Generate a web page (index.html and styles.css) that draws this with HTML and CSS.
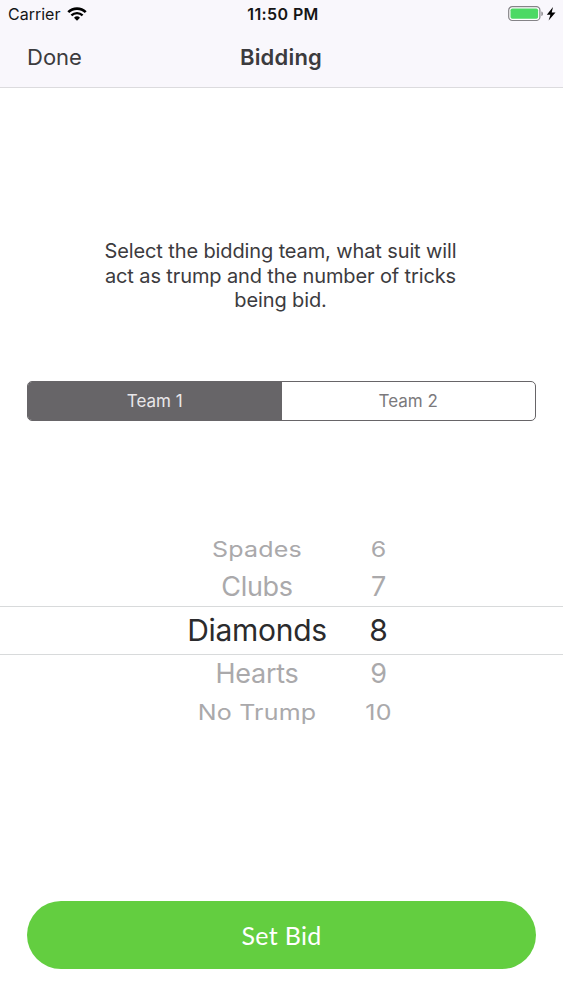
FILE: index.html
```html
<!DOCTYPE html>
<html lang="en">
<head>
  <meta charset="UTF-8">
  <meta name="viewport" content="width=device-width, initial-scale=1.0">
  <title>Bidding</title>
  <link rel="stylesheet" href="styles.css">
</head>
<body>

  <!-- Status bar and navigation -->
  <header class="header">
    <div class="status-bar">
      <div class="status-left">
        <span class="carrier">Carrier</span>
        <svg class="wifi" width="20" height="14" viewBox="0 0 20 14">
          <path d="M1.300 5.100a12.400 12.400 0 0 1 17.400 0" fill="none" stroke="#000" stroke-width="2.700"/>
          <path d="M4.400 8.400a8 8 0 0 1 11.200 0" fill="none" stroke="#000" stroke-width="2.300"/>
          <path d="M10 13.800l-3-3.100a4.300 4.300 0 0 1 6 0z"/>
        </svg>
      </div>
      <span class="time">11:50 PM</span>
      <div class="status-right">
        <svg width="49" height="16" viewBox="0 0 49 16">
          <rect x=".7" y=".7" width="31.2" height="13.8" rx="3.6" fill="#fff" stroke="#858387" stroke-width="1.2"/>
          <rect x="2.5" y="2.5" width="27.6" height="10.2" rx="1.8" fill="#4cd964"/>
          <path d="M33.4 5.4c2 .6 2 3.9 0 4.5z" fill="#858387"/>
          <path d="M45 1l-6.200 7.700h3.600L40.600 14.600l6.900-8.100h-3.800z"/>
        </svg>
      </div>
    </div>
    <nav class="nav-bar">
      <button class="done-btn">Done</button>
      <h1 class="title">Bidding</h1>
    </nav>
  </header>

  <main class="content">
    <p class="hint">Select the bidding team, what suit will<br>act as trump and the number of tricks<br>being bid.</p>

    <div class="segments">
      <button class="segment active">Team 1</button>
      <button class="segment">Team 2</button>
    </div>

    <!-- Suit and tricks picker -->
    <div class="picker">
      <div class="row far"><span class="suit">Spades</span><span class="tricks">6</span></div>
      <div class="row near"><span class="suit">Clubs</span><span class="tricks">7</span></div>
      <div class="row selected"><span class="suit">Diamonds</span><span class="tricks">8</span></div>
      <div class="row near"><span class="suit">Hearts</span><span class="tricks">9</span></div>
      <div class="row far"><span class="suit">No Trump</span><span class="tricks">10</span></div>
    </div>

    <button class="bid-btn">Set Bid</button>
  </main>

</body>
</html>
```
FILE: styles.css
```css
* {
  box-sizing: border-box;
}

body {
  margin: 0;
  height: 1000px;
  display: flex;
  flex-direction: column;
  font-family: Inter, 'Liberation Sans', sans-serif;
  background-color: #fff;
  color: #3c3b3e;
}

button {
  border: none;
  padding: 0;
  background: none;
  font-family: inherit;
  color: inherit;
}

/* Header */
.header {
  height: 88px;
  background-color: #f9f7fc;
  border-bottom: 1px solid #dcdbde;
}

.status-bar {
  display: grid;
  grid-template-columns: 1fr auto 1fr;
  align-items: center;
  height: 28px;
  padding: 0 6px 0 8px;
  color: #151516;
}

.status-left {
  display: flex;
  align-items: center;
  gap: 7px;
}

.carrier {
  font-size: 16px;
}

.wifi {
  margin-bottom: 1px;
}

.time {
  padding-left: 1px;
  font-size: 16px;
  font-weight: 600;
  letter-spacing: 0.4px;
}

.status-right {
  display: flex;
  justify-content: flex-end;
}

.nav-bar {
  display: grid;
  grid-template-columns: 1fr auto 1fr;
  align-items: center;
  height: 58px;
  padding: 0 28px 0 27px;
}

.done-btn {
  justify-self: start;
  font-size: 22px;
}

.title {
  margin: 0;
  font-size: 22px;
  font-weight: 600;
  letter-spacing: 0.2px;
}

/* Content */
.content {
  flex: 1;
  display: flex;
  flex-direction: column;
}

.hint {
  margin: 151px 2px 0 0;
  font-size: 20px;
  line-height: 24.5px;
  letter-spacing: -0.12px;
  text-align: center;
}

.segments {
  display: flex;
  height: 40px;
  margin: 68px 27px 0;
  border: 1px solid #676568;
  border-radius: 5px;
  overflow: hidden;
}

.segment {
  flex: 1;
  font-size: 17px;
  color: #7b797c;
}

.segment.active {
  background-color: #676568;
  color: #e9e7ea;
}

/* Picker */
.picker {
  margin-top: 109px;
}

.row {
  display: flex;
  align-items: center;
  height: 38px;
  padding-left: 157px;
  color: #aaa9ab;
}

.suit,
.tricks {
  text-align: center;
  white-space: nowrap;
}

.suit {
  width: 200px;
}

.tricks {
  width: 43px;
}

.far {
  font-size: 25px;
  letter-spacing: 0.2px;
}

.far span {
  transform: scaleY(0.85);
}

.near {
  font-size: 27px;
  letter-spacing: -0.3px;
}

.near span {
  transform: scaleY(0.98);
}

.selected {
  height: 49px;
  border-top: 1px solid #d8dadb;
  border-bottom: 1px solid #d8dadb;
  font-size: 30px;
  letter-spacing: -0.3px;
  color: #2b2b2d;
}

/* Set bid button */
.bid-btn {
  height: 68px;
  margin: auto 27px 31px;
  padding-bottom: 1px;
  border-radius: 34px;
  background-color: #63ce40;
  font-family: Lato, sans-serif;
  font-size: 25px;
  letter-spacing: 0.3px;
  color: #fff;
}
```
